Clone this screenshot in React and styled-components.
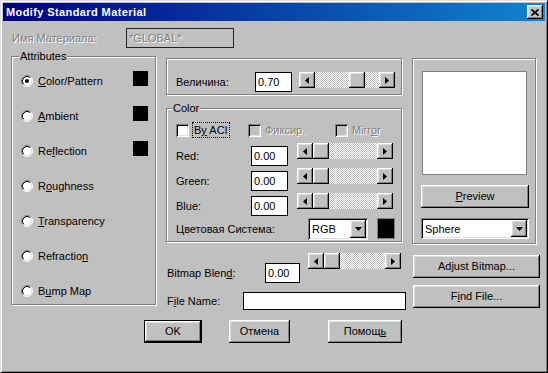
import styled, { createGlobalStyle } from "styled-components";

const GlobalStyle = createGlobalStyle`
  html, body {
    margin: 0;
    padding: 0;
    background: #c0c0c0;
  }
  body {
    font-family: "Liberation Sans", Arial, sans-serif;
    font-size: 11px;
    color: #000;
  }
`;

// рамки в стилі Win95
const raisedBevel = `
  background: #c0c0c0;
  box-shadow: inset -1px -1px 0 #000, inset 1px 1px 0 #fff,
    inset -2px -2px 0 #808080, inset 2px 2px 0 #dfdfdf;
`;

const sunkenBevel = `
  box-shadow: inset 1px 1px 0 #808080, inset -1px -1px 0 #fff,
    inset 2px 2px 0 #000, inset -2px -2px 0 #dfdfdf;
`;

export default function App() {
  return (
    <>
      <GlobalStyle />
      <Window>
        <TitleBar>
          <TitleText>Modify Standard Material</TitleText>
          <CloseButton>
            <svg width="8" height="7" viewBox="0 0 8 7">
              <path d="M0.5 0.5 L7.5 6.5 M7.5 0.5 L0.5 6.5" stroke="#000" strokeWidth="1.7" />
            </svg>
          </CloseButton>
        </TitleBar>

        <Body>
          <NameRow>
            <NameLabel>Имя Материала:</NameLabel>
            <NameField>*GLOBAL*</NameField>
          </NameRow>

          <MainRow>
            <AttributesGroup>
              <Legend $left={7}>Attributes</Legend>
              <RadioList>
                <RadioRow name={<><U>C</U>olor/Pattern</>} checked swatch />
                <RadioRow name={<><U>A</U>mbient</>} swatch />
                <RadioRow name={<>Re<U>f</U>lection</>} swatch />
                <RadioRow name={<>R<U>o</U>ughness</>} />
                <RadioRow name={<><U>T</U>ransparency</>} />
                <RadioRow name={<>Refractio<U>n</U></>} />
                <RadioRow name={<>B<U>u</U>mp Map</>} />
              </RadioList>
            </AttributesGroup>

            <MiddleColumn>
              <SizeGroup>
                <FieldLabel $w={79} $h={20}>Величина:</FieldLabel>
                <ValueField $w={37}>0.70</ValueField>
                <ScrollBar width={96} value={0.7} gap={7} />
              </SizeGroup>

              <ColorGroup>
                <Legend $left={5}>Color</Legend>
                <CheckRow>
                  <CheckItem $w={72}>
                    <CheckBox />
                    <FocusText>
                      B<U>y</U> ACI
                    </FocusText>
                  </CheckItem>
                  <CheckItem $w={87}>
                    <CheckBox $disabled />
                    <Disabled>Фиксир.</Disabled>
                  </CheckItem>
                  <CheckItem>
                    <CheckBox $disabled />
                    <Disabled>
                      Mirr<U>o</U>r
                    </Disabled>
                  </CheckItem>
                </CheckRow>
                {["Red:", "Green:", "Blue:"].map((name) => (
                  <ValueRow key={name}>
                    <FieldLabel $w={75} $h={20} $top={3}>
                      {name}
                    </FieldLabel>
                    <ValueField $w={37} $top={3}>
                      0.00
                    </ValueField>
                    <ScrollBar width={96} value={0} gap={9} />
                  </ValueRow>
                ))}
                <SystemRow>
                  <FieldLabel $w={132} $h={22}>
                    Цветовая Система:
                  </FieldLabel>
                  <Combo width={60} height={22} value="RGB" />
                  <ColorSwatch />
                </SystemRow>
              </ColorGroup>

              <BitmapRow>
                <FieldLabel $w={98} $h={20} $top={10}>
                  Bitmap Blen<U>d</U>:
                </FieldLabel>
                <ValueField $w={35} $top={10}>
                  0.00
                </ValueField>
                <ScrollBar width={93} value={0} gap={8} />
              </BitmapRow>

              <FileRow>
                <FieldLabel $w={76} $h={18}>
                  F<U>i</U>le Name:
                </FieldLabel>
                <ValueField $w={163} $h={18} />
              </FileRow>
            </MiddleColumn>

            <RightColumn>
              <PreviewGroup>
                <PreviewArea />
                <Button $w={108} $top={10}>
                  <U>P</U>review
                </Button>
                <ComboWrap>
                  <Combo width={108} height={21} value="Sphere" />
                </ComboWrap>
              </PreviewGroup>
              <Button $w={127} $top={11} $left={1}>
                Adjust Bitmap...
              </Button>
              <Button $w={127} $top={7} $left={1}>
                F<U>i</U>nd File...
              </Button>
            </RightColumn>
          </MainRow>

          <ButtonRow>
            <DefaultButton $w={58}>OK</DefaultButton>
            <Button $w={61}>Отмена</Button>
            <Button $w={74} $left={11}>
              Помощ<U>ь</U>
            </Button>
          </ButtonRow>
        </Body>
      </Window>
    </>
  );
}

// Рядок з радіокнопкою в групі Attributes
function RadioRow({ name, checked, swatch }) {
  return (
    <RadioLine>
      <RadioLeft>
        <svg width="12" height="12" viewBox="0 0 12 12">
          <circle cx="6" cy="6" r="5" fill="#fff" />
          <path d="M2.11 9.89 A5.5 5.5 0 0 1 9.89 2.11" fill="none" stroke="#808080" />
          <path d="M9.89 2.11 A5.5 5.5 0 0 1 2.11 9.89" fill="none" stroke="#fff" />
          <path d="M2.82 9.18 A4.5 4.5 0 0 1 9.18 2.82" fill="none" stroke="#000" />
          <path d="M9.18 2.82 A4.5 4.5 0 0 1 2.82 9.18" fill="none" stroke="#dfdfdf" />
          {checked && <circle cx="6" cy="6" r="2" fill="#000" />}
        </svg>
        <span>{name}</span>
      </RadioLeft>
      {swatch && <AttrSwatch />}
    </RadioLine>
  );
}

// Горизонтальна смуга прокрутки
function ScrollBar({ width, value, gap }) {
  const travel = width - 48;
  return (
    <Scroll $w={width} $gap={gap}>
      <ArrowButton>
        <svg width="4" height="7" viewBox="0 0 4 7">
          <polygon points="4,0 0,3.5 4,7" fill="#000" />
        </svg>
      </ArrowButton>
      <Track>
        <Thumb style={{ marginLeft: Math.round(value * travel) }} />
      </Track>
      <ArrowButton>
        <svg width="4" height="7" viewBox="0 0 4 7">
          <polygon points="0,0 4,3.5 0,7" fill="#000" />
        </svg>
      </ArrowButton>
    </Scroll>
  );
}

// Випадаючий список
function Combo({ width, height, value }) {
  return (
    <ComboBox $w={width} $h={height}>
      <ComboText>{value}</ComboText>
      <DropButton>
        <svg width="7" height="4" viewBox="0 0 7 4">
          <polygon points="0,0 7,0 3.5,4" fill="#000" />
        </svg>
      </DropButton>
    </ComboBox>
  );
}

const Window = styled.div`
  box-sizing: border-box;
  width: 548px;
  height: 373px;
  background: #c0c0c0;
  border: 1px solid;
  border-color: #dfdfdf #000 #000 #dfdfdf;
  box-shadow: inset 1px 1px 0 #fff, inset -1px -1px 0 #808080;
  padding: 2px;
  display: flex;
  flex-direction: column;
`;

const TitleBar = styled.div`
  height: 18px;
  display: flex;
  align-items: center;
  justify-content: space-between;
  padding: 0 2px 0 3px;
  background: linear-gradient(to right, #000080, #1084d0);
`;

const TitleText = styled.div`
  color: #fff;
  font-weight: bold;
  font-size: 11px;
  letter-spacing: 0.4px;
`;

const CloseButton = styled.div`
  width: 16px;
  height: 14px;
  display: flex;
  align-items: center;
  justify-content: center;
  ${raisedBevel}
`;

const Body = styled.div`
  padding-left: 8px;
`;

const NameRow = styled.div`
  display: flex;
  align-items: center;
  margin-top: 7px;
  padding-left: 1px;
  height: 20px;
`;

const Disabled = styled.span`
  color: #808080;
  text-shadow: 1px 1px 0 #fff;
`;

const NameLabel = styled(Disabled)`
  width: 114px;
`;

const NameField = styled(Disabled)`
  box-sizing: border-box;
  width: 108px;
  height: 20px;
  border: 1px solid #202020;
  padding-left: 2px;
  line-height: 18px;
`;

const MainRow = styled.div`
  display: flex;
  align-items: flex-start;
  margin-top: 8px;
`;

const Group = styled.div`
  box-sizing: border-box;
  position: relative;
  border: 1px solid #808080;
  box-shadow: 1px 1px 0 #fff, inset 1px 1px 0 #fff;
`;

const Legend = styled.span`
  position: absolute;
  top: -7px;
  left: ${(p) => p.$left}px;
  padding: 0 1px;
  background: #c0c0c0;
  line-height: 13px;
`;

const AttributesGroup = styled(Group)`
  width: 145px;
  height: 249px;
  padding: 16px 0 0 9px;
`;

const RadioList = styled.div`
  display: flex;
  flex-direction: column;
  gap: 19px;
`;

const RadioLine = styled.div`
  width: 127px;
  height: 16px;
  display: flex;
  align-items: center;
  justify-content: space-between;
`;

const RadioLeft = styled.div`
  display: flex;
  align-items: center;
  gap: 5px;

  svg {
    display: block;
  }
`;

const AttrSwatch = styled.div`
  width: 15px;
  height: 15px;
  background: #000;
  margin-bottom: 5px;
`;

const U = styled.span`
  text-decoration: underline;
`;

const MiddleColumn = styled.div`
  width: 240px;
  margin-left: 10px;
  display: flex;
  flex-direction: column;
`;

const SizeGroup = styled(Group)`
  width: 236px;
  height: 37px;
  margin-top: 2px;
  padding: 13px 0 0 9px;
  display: flex;
  align-items: flex-start;
`;

const FieldLabel = styled.div`
  width: ${(p) => p.$w}px;
  line-height: ${(p) => p.$h}px;
  margin-top: ${(p) => p.$top || 0}px;
  flex-shrink: 0;
  white-space: nowrap;
`;

const ValueField = styled.div`
  box-sizing: border-box;
  flex-shrink: 0;
  width: ${(p) => p.$w}px;
  height: ${(p) => p.$h || 20}px;
  margin-top: ${(p) => p.$top || 0}px;
  border: 1px solid #000;
  background: #fff;
  padding-left: 2px;
  line-height: ${(p) => (p.$h || 20) - 2}px;
`;

const Scroll = styled.div`
  width: ${(p) => p.$w}px;
  height: 16px;
  margin-left: ${(p) => p.$gap}px;
  flex-shrink: 0;
  display: flex;
`;

const ArrowButton = styled.div`
  width: 16px;
  height: 16px;
  flex-shrink: 0;
  display: flex;
  align-items: center;
  justify-content: center;
  ${raisedBevel}
`;

const Track = styled.div`
  flex: 1;
  display: flex;
  background: repeating-conic-gradient(#c0c0c0 0 25%, #fff 0 50%) 0 0 / 2px 2px;
`;

const Thumb = styled.div`
  width: 16px;
  height: 16px;
  ${raisedBevel}
`;

const ColorGroup = styled(Group)`
  width: 236px;
  height: 134px;
  margin-top: 13px;
  padding: 14px 0 0 9px;
`;

const CheckRow = styled.div`
  display: flex;
  height: 14px;
  margin-bottom: 6px;
`;

const CheckItem = styled.div`
  width: ${(p) => (p.$w ? `${p.$w}px` : "auto")};
  display: flex;
  align-items: center;
  gap: 4px;
`;

const CheckBox = styled.div`
  width: 13px;
  height: 13px;
  background: ${(p) => (p.$disabled ? "#c0c0c0" : "#fff")};
  ${sunkenBevel}
`;

const FocusText = styled.span`
  outline: 1px dotted #000;
  padding: 0 1px;
  line-height: 14px;
`;

const ValueRow = styled.div`
  height: 25px;
  display: flex;
  align-items: flex-start;
`;

const SystemRow = styled.div`
  display: flex;
  align-items: flex-start;
`;

const ComboBox = styled.div`
  box-sizing: border-box;
  width: ${(p) => p.$w}px;
  height: ${(p) => p.$h}px;
  padding: 2px;
  background: #fff;
  display: flex;
  ${sunkenBevel}
`;

const ComboText = styled.div`
  flex: 1;
  padding-left: 2px;
  display: flex;
  align-items: center;
`;

const DropButton = styled.div`
  width: 16px;
  display: flex;
  align-items: center;
  justify-content: center;
  ${raisedBevel}
`;

const ColorSwatch = styled.div`
  box-sizing: border-box;
  width: 18px;
  height: 21px;
  margin-left: 9px;
  background: #000;
  border: 1px solid #808080;
`;

const BitmapRow = styled.div`
  display: flex;
  align-items: flex-start;
  margin-top: 11px;
  padding-left: 1px;
`;

const FileRow = styled.div`
  display: flex;
  align-items: flex-start;
  margin-top: 9px;
  padding-left: 1px;
`;

const RightColumn = styled.div`
  width: 128px;
  margin-left: 6px;
  display: flex;
  flex-direction: column;
`;

const PreviewGroup = styled(Group)`
  width: 124px;
  height: 186px;
  margin-top: 2px;
  padding: 12px 0 0 8px;
`;

const PreviewArea = styled.div`
  box-sizing: border-box;
  width: 105px;
  height: 104px;
  margin-left: 1px;
  background: #fff;
  border: 1px solid #808080;
`;

const ComboWrap = styled.div`
  margin-top: 10px;
`;

const Button = styled.div`
  box-sizing: border-box;
  width: ${(p) => p.$w}px;
  height: 23px;
  margin-top: ${(p) => p.$top || 0}px;
  margin-left: ${(p) => p.$left || 0}px;
  display: flex;
  align-items: center;
  justify-content: center;
  padding-bottom: 1px;
  ${raisedBevel}
`;

const DefaultButton = styled(Button)`
  border: 1px solid #000;
`;

const ButtonRow = styled.div`
  display: flex;
  gap: 27px;
  margin-top: 10px;
  padding-left: 133px;
`;
